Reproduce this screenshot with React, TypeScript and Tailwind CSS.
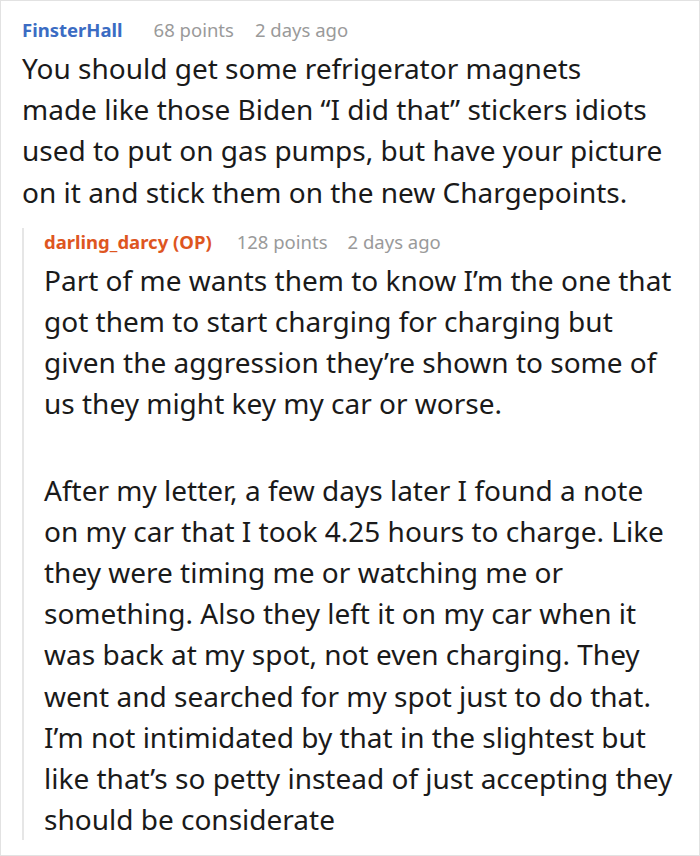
const commentLines = [
  'You should get some refrigerator magnets',
  'made like those Biden “I did that” stickers idiots',
  'used to put on gas pumps, but have your picture',
  'on it and stick them on the new Chargepoints.',
];

const replyPara1 = [
  'Part of me wants them to know I’m the one that',
  'got them to start charging for charging but',
  'given the aggression they’re shown to some of',
  'us they might key my car or worse.',
];

const replyPara2 = [
  'After my letter, a few days later I found a note',
  'on my car that I took 4.25 hours to charge. Like',
  'they were timing me or watching me or',
  'something. Also they left it on my car when it',
  'was back at my spot, not even charging. They',
  'went and searched for my spot just to do that.',
  'I’m not intimidated by that in the slightest but',
  'like that’s so petty instead of just accepting they',
  'should be considerate',
];

function Lines({ lines, className }: { lines: string[]; className?: string }) {
  return (
    <p className={`text-[28px] leading-[41.2px] text-[#1a1a1a] whitespace-nowrap ${className ?? ''}`}>
      {lines.map((l) => (
        <span key={l} className="block">
          {l}
        </span>
      ))}
    </p>
  );
}

export default function App() {
  return (
    <div
      className="w-[700px] h-[856px] bg-white border border-[#e2e2e2] overflow-hidden"
      style={{ fontFamily: '"Noto Sans", "Open Sans", sans-serif' }}
    >
      <div className="pl-[21px] pr-[10px] pt-[15px]">
        {/* top comment */}
        <div className="flex items-center text-[18.5px] leading-[28px]">
          <span className="font-bold text-[#3b6cc3]">FinsterHall</span>
          <span className="ml-[31px] text-[#9a9a9a]">68 points</span>
          <span className="ml-[21px] text-[#9a9a9a]">2 days ago</span>
        </div>
        <Lines lines={commentLines} className="mt-[4px]" />

        {/* reply */}
        <div className="mt-[15px] border-l-2 border-[#e6e6e6] pl-[20px]">
          <div className="flex items-center text-[18.5px] leading-[28px]">
            <span className="font-bold text-[#de561f]">darling_darcy (OP)</span>
            <span className="ml-[25px] text-[#9a9a9a]">128 points</span>
            <span className="ml-[20px] text-[#9a9a9a]">2 days ago</span>
          </div>
          <Lines lines={replyPara1} className="mt-[4px]" />
          <Lines lines={replyPara2} className="mt-[45px]" />
        </div>
      </div>
    </div>
  );
}
